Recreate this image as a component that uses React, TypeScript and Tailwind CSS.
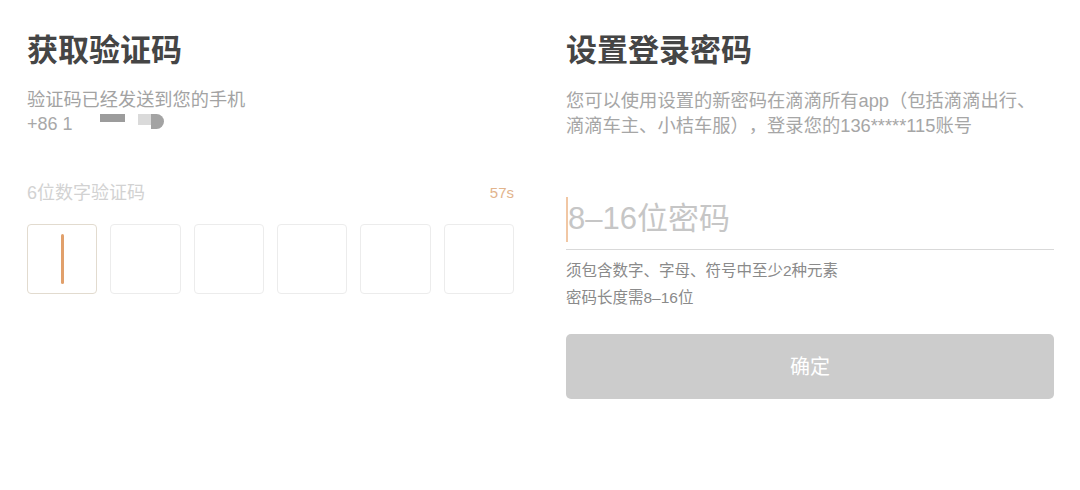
import React from "react";

const FONT = "font-['Liberation_Sans','Noto_Sans_CJK_SC',sans-serif]";

export default function App() {
  return (
    <div className={`w-[1080px] h-[490px] bg-white overflow-hidden [text-spacing-trim:space-all] ${FONT}`}>
      <div className="flex pl-[27px] gap-[52px]">
        {/* Left column */}
        <div className="flex flex-col w-[487px]">
          <h1 className="mt-[34px] text-[31px] leading-[34px] font-semibold text-[#454545]">
            获取验证码
          </h1>
          <p className="mt-[20px] text-[18.2px] leading-[24px] text-[#a3a3a3]">
            验证码已经发送到您的手机
          </p>
          <div className="flex items-center h-[24px] text-[18px] leading-[24px] text-[#a8a8a8]">
            <span>+86 1</span>
            <span className="ml-[27px] mb-[12px] w-[25px] h-[8px] bg-[#9c9c9c]" />
            <span className="ml-[13px] mb-[10px] w-[13px] h-[11px] bg-[#dadada]" />
            <span className="mb-[6px] w-[13px] h-[15px] bg-[#a3a3a3] rounded-r-full" />
          </div>
          <div className="mt-[44px] flex items-center justify-between h-[26px]">
            <span className="text-[18px] text-[#d2d2d2]">6位数字验证码</span>
            <span className="text-[15px] text-[#e2b48c]">57s</span>
          </div>
          <div className="mt-[18px] grid grid-cols-6 gap-[13px]">
            <div className="h-[70px] rounded-[4px] border border-[#e2dbcf] flex items-center justify-center">
              <div className="w-[3px] h-[50px] bg-[#e1a06b] rounded-full" />
            </div>
            <div className="h-[70px] rounded-[4px] border border-[#ececec]" />
            <div className="h-[70px] rounded-[4px] border border-[#ececec]" />
            <div className="h-[70px] rounded-[4px] border border-[#ececec]" />
            <div className="h-[70px] rounded-[4px] border border-[#ececec]" />
            <div className="h-[70px] rounded-[4px] border border-[#ececec]" />
          </div>
        </div>

        {/* Right column */}
        <div className="flex flex-col w-[488px]">
          <h1 className="mt-[34px] text-[31px] leading-[34px] font-semibold text-[#454545]">
            设置登录密码
          </h1>
          <p className="mt-[20px] text-[18.3px] leading-[25px] text-[#a6a6a6] whitespace-nowrap">
            您可以使用设置的新密码在滴滴所有app（包括滴滴出行、
            <br />
            滴滴车主、小桔车服），登录您的136*****115账号
          </p>
          <div className="mt-[54px] h-[58px] flex items-center border-b border-[#d9d9d9]">
            <div className="w-[2px] h-[45px] bg-[#f1c7a4] mb-[2px]" />
            <span className="text-[31px] text-[#c6c6c6] mb-[2px]">8–16位密码</span>
          </div>
          <div className="mt-[7px] text-[15.5px] leading-[27px] text-[#8a8a8a]">
            <p>须包含数字、字母、符号中至少2种元素</p>
            <p>密码长度需8–16位</p>
          </div>
          <button className="mt-[23px] h-[65px] w-full rounded-[5px] bg-[#cccccc] text-white text-[20px]">
            确定
          </button>
        </div>
      </div>
    </div>
  );
}
